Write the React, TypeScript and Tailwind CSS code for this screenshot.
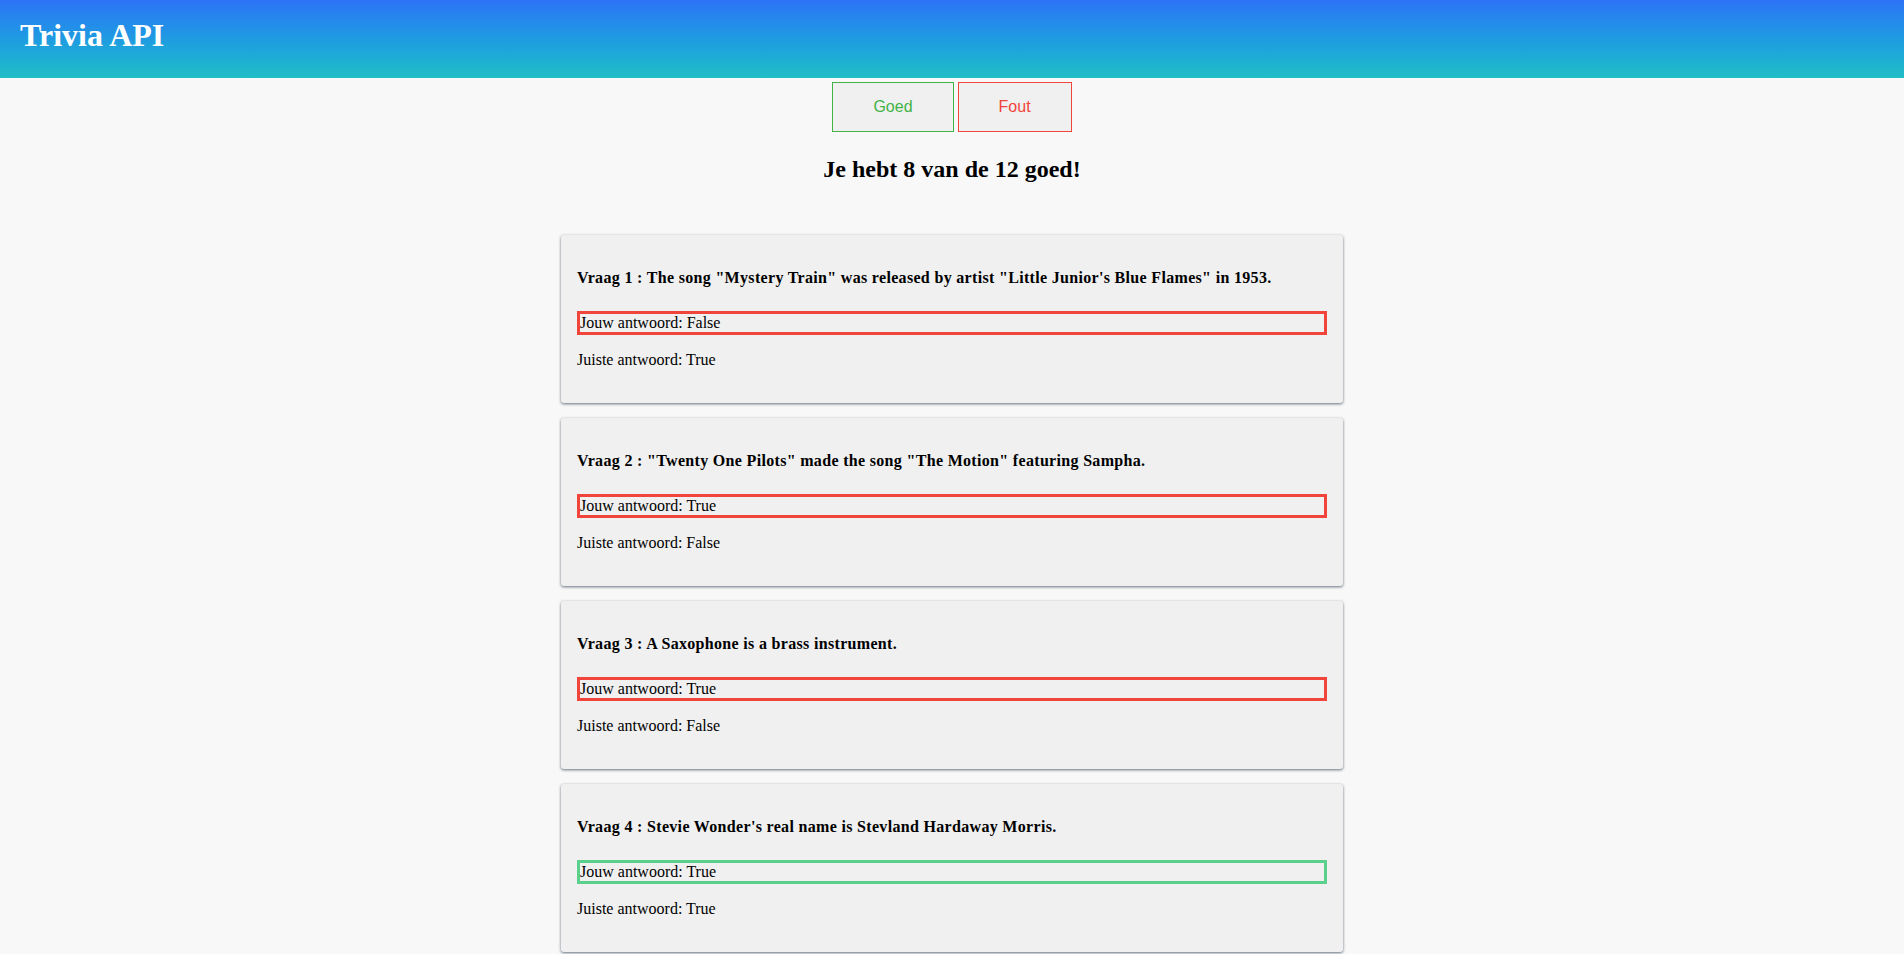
const results = [
  {
    nr: 1,
    question: 'The song "Mystery Train" was released by artist "Little Junior\'s Blue Flames" in 1953.',
    given: 'False',
    correct: 'True',
  },
  {
    nr: 2,
    question: '"Twenty One Pilots" made the song "The Motion" featuring Sampha.',
    given: 'True',
    correct: 'False',
  },
  {
    nr: 3,
    question: 'A Saxophone is a brass instrument.',
    given: 'True',
    correct: 'False',
  },
  {
    nr: 4,
    question: "Stevie Wonder's real name is Stevland Hardaway Morris.",
    given: 'True',
    correct: 'True',
  },
];

function ResultCard({ nr, question, given, correct }: (typeof results)[number]) {
  const good = given === correct;
  return (
    <div className="w-[782px] rounded-[3px] bg-[#f0f0f0] px-4 pt-[34px] pb-[34px] shadow-[0_1px_3px_rgba(40,55,75,0.7)]">
      <h4 className="text-base font-bold leading-[18px] tracking-[0.32px] text-black">
        Vraag {nr} : {question}
      </h4>
      <p
        className={
          good
            ? 'mt-[24px] border-[3px] border-[#5ad08b] leading-[18px] text-black'
            : 'mt-[24px] border-[3px] border-[#f1443a] leading-[18px] text-black'
        }
      >
        Jouw antwoord: {given}
      </p>
      <p className="mt-[16px] leading-[18px] text-black">Juiste antwoord: {correct}</p>
    </div>
  );
}

export default function App() {
  return (
    <div className="min-h-screen bg-[#f8f8f8] font-['Liberation_Serif',serif]">
      <header className="h-[78px] bg-gradient-to-b from-[#2d72f7] to-[#23bec6] px-5 pt-[17px]">
        <h1 className="text-[32px] font-bold leading-[37px] text-white">Trivia API</h1>
      </header>

      <div className="mt-1 flex justify-center gap-1 font-['Liberation_Sans',sans-serif]">
        <button className="border border-[#42b347] bg-[#f0f0f0] px-10 py-[15px] text-base leading-[18px] text-[#42b347]">
          Goed
        </button>
        <button className="border border-[#f1443a] bg-[#f0f0f0] px-10 py-[15px] text-base leading-[18px] text-[#f1443a]">
          Fout
        </button>
      </div>

      <h2 className="mt-[23px] text-center text-2xl font-bold leading-[28px] text-black">
        Je hebt 8 van de 12 goed!
      </h2>

      <div className="mt-[52px] flex flex-col items-center gap-[15px] pb-4">
        {results.map((r) => (
          <ResultCard key={r.nr} {...r} />
        ))}
      </div>
    </div>
  );
}
